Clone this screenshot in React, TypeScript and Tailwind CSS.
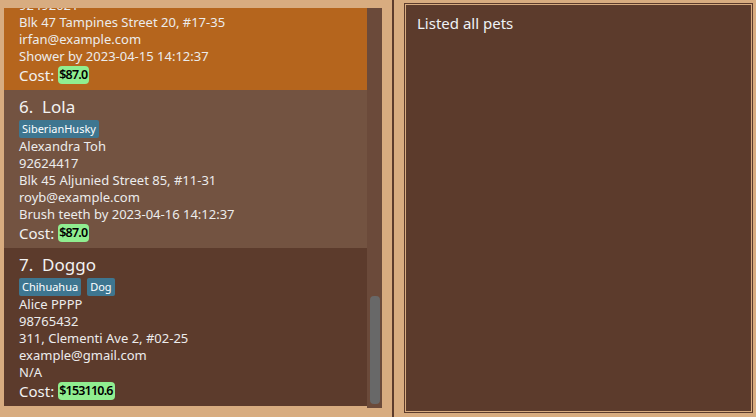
import React from "react";

type Pet = {
  idx: number;
  name: string;
  tags: string[];
  owner: string;
  phone: string;
  address: string;
  email: string;
  task: string;
  cost: string;
  bg: string;
};

const pets: Pet[] = [
  {
    idx: 5,
    name: "Shiro",
    tags: ["Shiba"],
    owner: "Irfan Ibrahim",
    phone: "92492021",
    address: "Blk 47 Tampines Street 20, #17-35",
    email: "irfan@example.com",
    task: "Shower by 2023-04-15 14:12:37",
    cost: "$87.0",
    bg: "bg-[#b5651d]",
  },
  {
    idx: 6,
    name: "Lola",
    tags: ["SiberianHusky"],
    owner: "Alexandra Toh",
    phone: "92624417",
    address: "Blk 45 Aljunied Street 85, #11-31",
    email: "royb@example.com",
    task: "Brush teeth by 2023-04-16 14:12:37",
    cost: "$87.0",
    bg: "bg-[#735341]",
  },
  {
    idx: 7,
    name: "Doggo",
    tags: ["Chihuahua", "Dog"],
    owner: "Alice PPPP",
    phone: "98765432",
    address: "311, Clementi Ave 2, #02-25",
    email: "example@gmail.com",
    task: "N/A",
    cost: "$153110.6",
    bg: "bg-[#5c3b2c]",
  },
];

function Card({ p, first }: { p: Pet; first?: boolean }) {
  return (
    <div
      className={`${p.bg} shrink-0 pl-[15px] pt-[7px] pb-[6px] flex flex-col ${first ? "-mt-[76px]" : ""}`}
    >
      <div className="h-[20px] leading-[20px] text-[17px] text-[#f2f2f2] whitespace-pre">
        {`${p.idx}.  ${p.name}`}
      </div>
      <div className="mt-[3px] h-[18px] flex gap-[6px]">
        {p.tags.map((t) => (
          <span
            key={t}
            className="bg-[#3e7690] text-white text-[11px] leading-[18px] px-[3px] rounded-[2px]"
          >
            {t}
          </span>
        ))}
      </div>
      <div className="text-[13px] leading-[17px] text-[#ececec]">
        <div>{p.owner}</div>
        <div>{p.phone}</div>
        <div className="whitespace-nowrap">{p.address}</div>
        <div>{p.email}</div>
        <div className="whitespace-nowrap">{p.task}</div>
      </div>
      <div className="mt-[1px] h-[18px] flex items-center">
        <span className="text-[15px] text-[#f2f2f2] leading-[18px]">Cost:</span>
        <span className="ml-[4px] bg-[#90ee90] text-black text-[12.5px] font-semibold tracking-[-0.8px] leading-[18px] pl-[1px] pr-[2px] rounded-[4px]">
          {p.cost}
        </span>
      </div>
    </div>
  );
}

export default function App() {
  return (
    <div
      className="w-[756px] h-[417px] bg-[#d8ac80] flex overflow-hidden"
      style={{ fontFamily: '"Noto Sans", sans-serif' }}
    >
      <div className="ml-[4px] mt-[8px] w-[378px] h-[400px] flex overflow-hidden">
        <div className="w-[363px] h-full overflow-hidden flex flex-col">
          {pets.map((p, i) => (
            <Card key={p.idx} p={p} first={i === 0} />
          ))}
        </div>
        <div className="w-[15px] h-full bg-[#6b4a3a] relative">
          <div className="absolute left-[3px] right-[2px] top-[288px] h-[108px] rounded-[4px] bg-[#686868]" />
        </div>
      </div>
      <div className="ml-[10px] w-[2px] h-full bg-[#5c3b2c]" />
      <div className="ml-[10px] mt-[3px] w-[349px] h-[410px] border border-[#5c3b2c] bg-[#d8ac80] p-[1px]">
        <div className="w-full h-full bg-[#5c3b2c] pl-[11px] pt-[8px]">
          <div className="text-[15px] leading-[20px] text-[#eef2f6]">Listed all pets</div>
        </div>
      </div>
    </div>
  );
}
